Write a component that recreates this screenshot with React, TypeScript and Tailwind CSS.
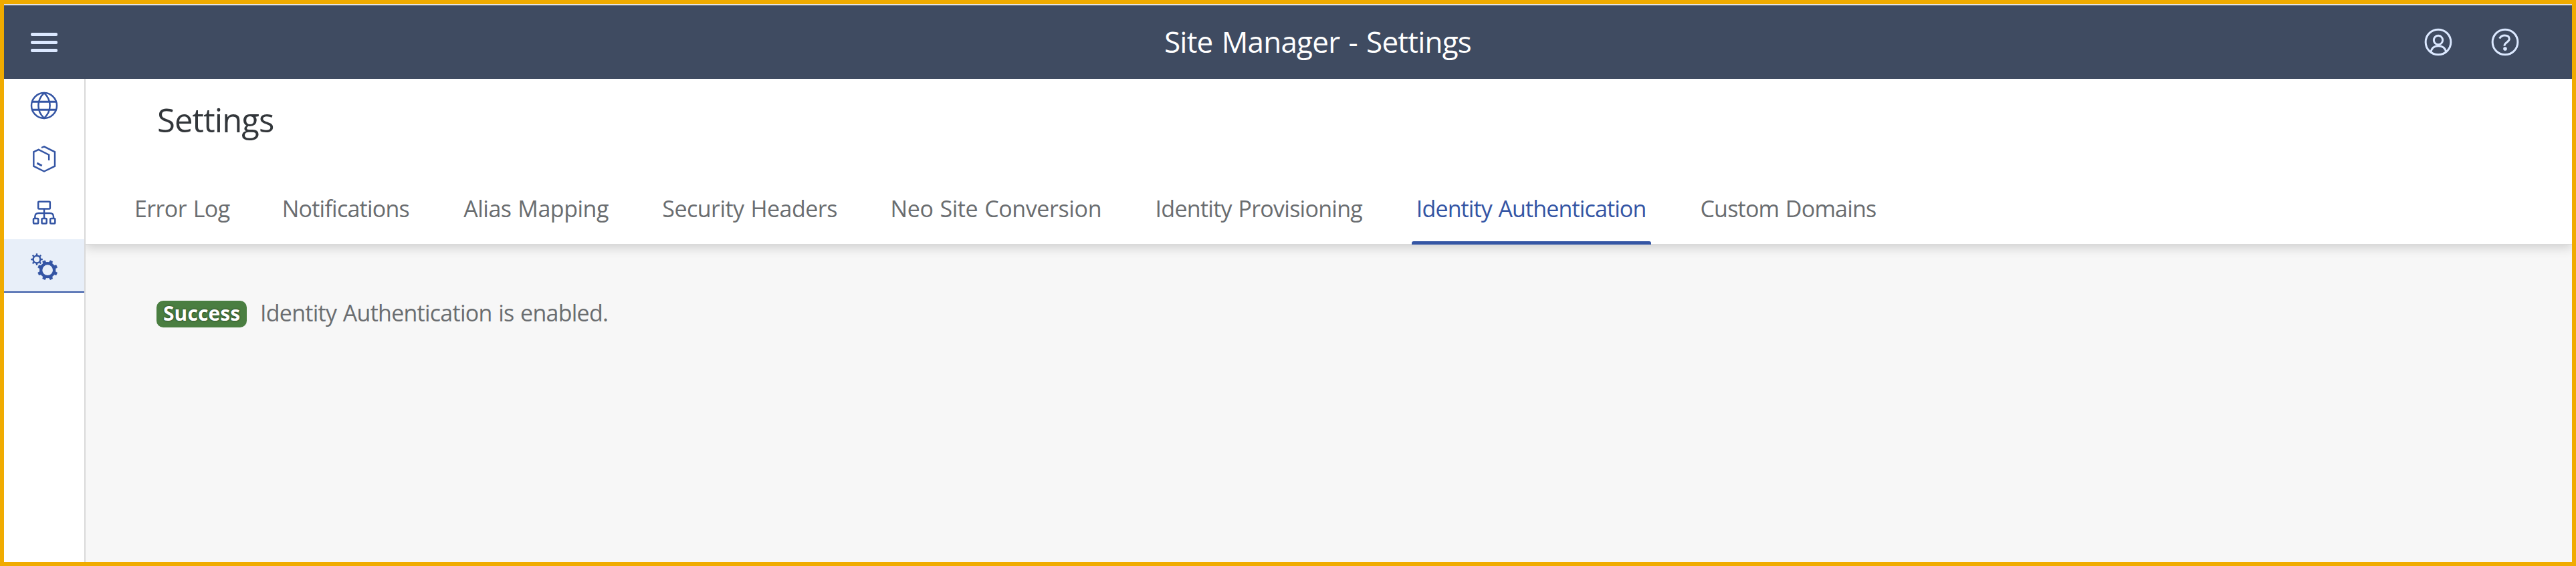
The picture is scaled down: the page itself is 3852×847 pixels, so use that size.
import type { ReactNode } from "react";

const tabs = [
  { label: "Error Log", box: "w-[220.8px] tracking-[-0.6px] [word-spacing:1.5px]" },
  { label: "Notifications", box: "w-[271.6px] tracking-[-0.76px]" },
  { label: "Alias Mapping", box: "w-[297px] tracking-[-0.5px] [word-spacing:1.5px]" },
  { label: "Security Headers", box: "w-[341.2px] tracking-[-0.52px] [word-spacing:1.5px]" },
  { label: "Neo Site Conversion", box: "w-[396.1px] tracking-[-0.39px] [word-spacing:1.5px]" },
  { label: "Identity Provisioning", box: "w-[390.3px] tracking-[-0.73px] [word-spacing:1.5px]" },
  { label: "Identity Authentication", box: "w-[424.6px] tracking-[-0.87px] [word-spacing:1.5px]", active: true },
  { label: "Custom Domains", box: "w-[270px] tracking-[-0.78px] [word-spacing:1.5px]" },
];

function GlobeIcon() {
  return (
    <svg width="42" height="42" viewBox="0 0 42 42" fill="none" stroke="currentColor" strokeWidth="2.5">
      <circle cx="21" cy="21" r="19" />
      <path d="M21 2.200C9.500 13 9.500 29 21 39.800C32.500 29 32.500 13 21 2.200Z" />
      <path d="M3.300 15.200H38.700M3.300 27.200H38.700" strokeWidth="2.900" />
    </svg>
  );
}

function HexIcon() {
  return (
    <svg width="40" height="46" viewBox="48 30 120 138" fill="none" stroke="currentColor" strokeWidth="7.300">
      <path d="M96 48L108 43L156 67V131L108 154.500L61 131V67L83 56.500L129.500 80V105" />
      <path d="M76 117.500L98 129" strokeWidth="9" />
    </svg>
  );
}

function SitemapIcon() {
  return (
    <svg width="40" height="40" viewBox="138 175 120 120" fill="none" stroke="currentColor" strokeWidth="7.500">
      <rect x="171.500" y="186.500" width="53" height="32" rx="3" />
      <path d="M198 219V260M157 260V254Q157 238 173 238H224Q240 238 240 254V260" />
      <rect x="150" y="262" width="21.500" height="22.500" rx="3" />
      <rect x="187.500" y="262" width="21.500" height="22.500" rx="3" />
      <rect x="225.500" y="262" width="21.500" height="22.500" rx="3" />
    </svg>
  );
}

const bigTeeth = [22.5, 67.5, 112.5, 157.5, 202.5, 247.5, 292.5, 337.5];
const smallTeeth = [0, 45, 90, 135, 180, 225, 270, 315];

function GearsIcon() {
  return (
    <svg width="42" height="42" viewBox="45 37 126 126" fill="none" stroke="currentColor">
      <circle cx="123.500" cy="115.500" r="30" strokeWidth="13" />
      {bigTeeth.map((a) => (
        <path
          key={a}
          d="M116 82L117.500 71H129.500L131 82Z"
          fill="currentColor"
          strokeWidth="1.500"
          strokeLinejoin="round"
          transform={`rotate(${a} 123.500 115.500)`}
        />
      ))}
      <circle cx="75" cy="67.500" r="16" strokeWidth="7.500" />
      {smallTeeth.map((a) => (
        <path key={a} d="M75 50V41" strokeWidth="7" transform={`rotate(${a} 75 67.500)`} />
      ))}
    </svg>
  );
}

function UserIcon() {
  return (
    <svg width="42" height="42" viewBox="135 127 126 126" fill="none" stroke="currentColor" strokeWidth="9">
      <circle cx="198" cy="190" r="56.500" />
      <circle cx="198" cy="181" r="20" />
      <path d="M164 236C168 216 181 207 198 207S230 216 234 236" />
    </svg>
  );
}

function HelpIcon() {
  return (
    <svg width="42" height="42" viewBox="435 127 126 126" fill="none" stroke="currentColor" strokeWidth="9">
      <circle cx="498" cy="190" r="56.500" />
      <path d="M473 174C478 164 485 160 496 160C509 160 517 166 517 176C517 190 495 190 495 207" strokeWidth="9" />
      <circle cx="498" cy="220" r="8.500" fill="currentColor" stroke="none" />
    </svg>
  );
}

function NavItem({ children, active }: { children: ReactNode; active?: boolean }) {
  return (
    <a
      className={
        active
          ? "flex h-20 items-center justify-center border-b-2 border-[#3455a4] bg-[#e8eff9] pt-[3px]"
          : "flex h-20 items-center justify-center"
      }
    >
      {children}
    </a>
  );
}

export default function App() {
  return (
    <div className="flex h-[847px] w-full flex-col border-6 border-[#f0ab00] bg-white font-['Open_Sans',sans-serif] font-[430] whitespace-nowrap">
      <div className="h-0.5 shrink-0 bg-[#e3e3e3]" />
      <header className="flex h-[110px] shrink-0 items-center bg-[#3f4b61] text-[#dbe8ff]">
        <div className="w-[1735px] shrink-0 pl-10">
          <button className="flex w-10 flex-col gap-[7px]">
            <span className="h-[5px] rounded-[2px] bg-[#dbe8ff]" />
            <span className="h-[5px] rounded-[2px] bg-[#dbe8ff]" />
            <span className="h-[5px] rounded-[2px] bg-[#dbe8ff]" />
          </button>
        </div>
        <h1 className="pb-[3px] text-[44px] leading-[60px] font-[430] tracking-[-0.77px] text-white [word-spacing:2.5px]">
          Site Manager - Settings
        </h1>
        <div className="ml-auto flex gap-[58px] pr-[79px]">
          <UserIcon />
          <HelpIcon />
        </div>
      </header>

      <div className="flex min-h-0 flex-1">
        <nav className="w-[122px] shrink-0 border-r-2 border-[#d9d9d9] bg-white text-[#3455a4]">
          <NavItem><GlobeIcon /></NavItem>
          <NavItem><HexIcon /></NavItem>
          <NavItem><SitemapIcon /></NavItem>
          <NavItem active><GearsIcon /></NavItem>
        </nav>

        <main className="min-w-0 flex-1 overflow-hidden bg-[#f7f7f7]">
          <div className="flex h-[248px] flex-col border-b border-[#d9d9d9] bg-white shadow-[0_5px_15px_rgba(0,0,0,0.16)]">
            <h2 className="mt-[27px] ml-[107px] h-[68px] text-[49px] leading-[68px] font-[430] tracking-[-0.9px] text-[#32363a]">
              Settings
            </h2>
            <div className="mt-auto flex h-[105px] pl-[72.900px] text-[34px] leading-[105px] text-[#6a6d70]">
              {tabs.map((t) => (
                <div key={t.label} className={`relative shrink-0 ${t.box} ${t.active ? "text-[#3455a4]" : ""}`}>
                  {t.label}
                  {t.active && (
                    <span className="absolute -bottom-px -left-[6.500px] h-[5px] w-[358px] rounded-t-[3px] bg-[#3455a4]" />
                  )}
                </div>
              ))}
            </div>
          </div>

          <div className="mt-[84px] ml-[106px] flex h-10 items-center gap-[20px]">
            <span className="h-10 w-[135px] rounded-[10px] bg-[#4a7e41] pl-2.5 text-[30px] leading-[37px] font-bold tracking-[0.1px] text-white [text-shadow:0_0_3px_rgba(0,0,0,0.6)]">
              Success
            </span>
            <span className="pb-[5px] text-[34px] leading-[46px] tracking-[-0.74px] text-[#6a6d70] [word-spacing:1.5px]">
              Identity Authentication is enabled.
            </span>
          </div>
        </main>
      </div>
    </div>
  );
}
